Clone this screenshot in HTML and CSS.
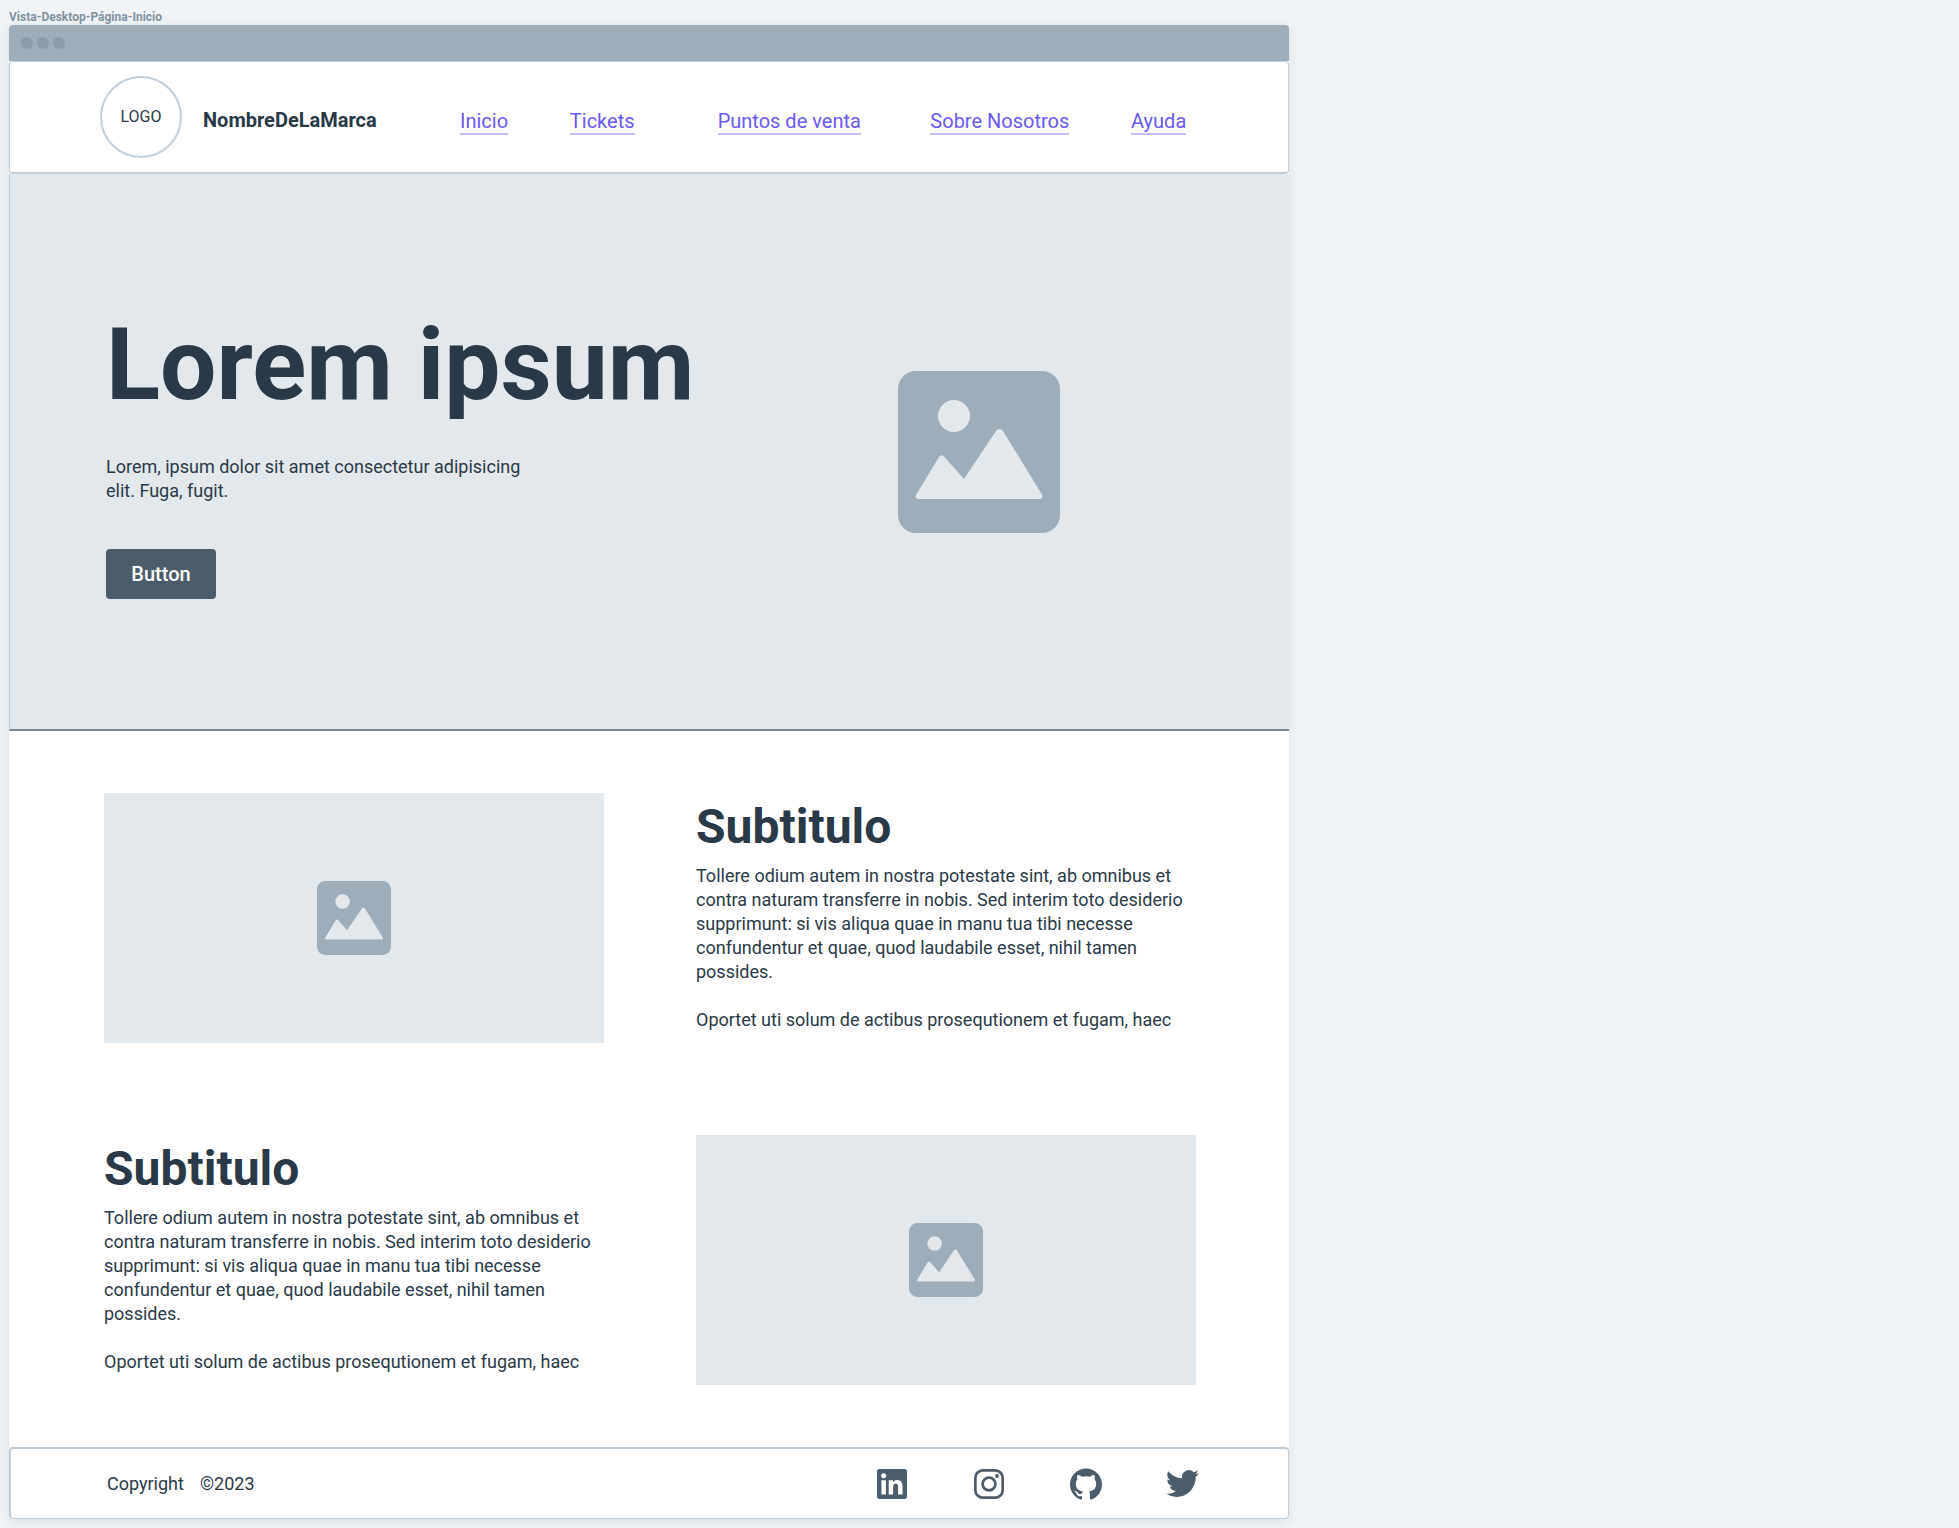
FILE: index.html
```html
<!DOCTYPE html>
<html lang="es">
<head>
<meta charset="utf-8">
<title>Vista-Desktop-Página-Inicio</title>
<link rel="stylesheet" href="styles.css">
</head>
<body>
<svg class="sprite" aria-hidden="true">
  <symbol id="picture" viewBox="0 0 162 162">
    <rect class="picture-frame" width="162" height="162" rx="18"/>
    <circle class="picture-shape" cx="56" cy="45" r="16"/>
    <path class="picture-shape" d="M18 124 41 86Q43 82.500 46.500 86L66 108 98 60Q101.500 56 105 60L144 123.500Q145.500 127.500 142 128H20Q16.500 127.500 18 124Z"/>
  </symbol>
</svg>
<p class="frame-label">Vista-Desktop-Página-Inicio</p>
<div class="frame">
  <div class="titlebar"><span class="dot"></span><span class="dot"></span><span class="dot"></span></div>
  <header class="header">
    <div class="logo">LOGO</div>
    <div class="brand">NombreDeLaMarca</div>
    <nav class="nav">
      <a href="#inicio">Inicio</a>
      <a href="#tickets">Tickets</a>
      <a href="#puntos">Puntos de venta</a>
      <a href="#nosotros">Sobre Nosotros</a>
      <a href="#ayuda">Ayuda</a>
    </nav>
  </header>
  <main>
    <section class="hero" id="inicio">
      <div class="hero-copy">
        <h1 class="hero-title">Lorem ipsum</h1>
        <p class="hero-text">Lorem, ipsum dolor sit amet consectetur adipisicing<br>elit. Fuga, fugit.</p>
        <button class="button" type="button">Button</button>
      </div>
      <svg class="hero-picture" role="img" aria-label="Imagen"><use href="#picture"/></svg>
    </section>
    <section class="features">
      <div class="media"><svg class="media-picture" role="img" aria-label="Imagen"><use href="#picture"/></svg></div>
      <article class="feature">
        <h2 class="subtitle">Subtitulo</h2>
        <p class="text">Tollere odium autem in nostra potestate sint, ab omnibus et<br>contra naturam transferre in nobis. Sed interim toto desiderio<br>supprimunt: si vis aliqua quae in manu tua tibi necesse<br>confundentur et quae, quod laudabile esset, nihil tamen<br>possides.</p>
        <p class="text">Oportet uti solum de actibus prosequtionem et fugam, haec</p>
      </article>
      <article class="feature">
        <h2 class="subtitle">Subtitulo</h2>
        <p class="text">Tollere odium autem in nostra potestate sint, ab omnibus et<br>contra naturam transferre in nobis. Sed interim toto desiderio<br>supprimunt: si vis aliqua quae in manu tua tibi necesse<br>confundentur et quae, quod laudabile esset, nihil tamen<br>possides.</p>
        <p class="text">Oportet uti solum de actibus prosequtionem et fugam, haec</p>
      </article>
      <div class="media"><svg class="media-picture" role="img" aria-label="Imagen"><use href="#picture"/></svg></div>
    </section>
  </main>
  <footer class="footer">
    <p class="copyright"><span>Copyright</span><span>©2023</span></p>
    <div class="social">
      <a href="#linkedin" aria-label="LinkedIn"><svg width="30" height="30" viewBox="0 0 24 24"><path d="M20.447 20.452h-3.554v-5.569c0-1.328-.027-3.037-1.852-3.037-1.853 0-2.136 1.445-2.136 2.939v5.667H9.351V9h3.414v1.561h.046c.477-.9 1.637-1.85 3.37-1.85 3.601 0 4.267 2.37 4.267 5.455v6.286zM5.337 7.433c-1.144 0-2.063-.926-2.063-2.065 0-1.138.92-2.063 2.063-2.063 1.14 0 2.064.925 2.064 2.063 0 1.139-.925 2.065-2.064 2.065zm1.782 13.019H3.555V9h3.564v11.452zM22.225 0H1.771C.792 0 0 .774 0 1.729v20.542C0 23.227.792 24 1.771 24h20.451C23.2 24 24 23.227 24 22.271V1.729C24 .774 23.2 0 22.222 0h.003z"/></svg></a>
      <a href="#instagram" aria-label="Instagram"><svg width="30" height="30" viewBox="0 0 30 30"><rect class="stroke" x="1.350" y="1.350" width="27.300" height="27.300" rx="7.500"/><circle class="stroke" cx="15" cy="15" r="6.400"/><circle cx="23" cy="7" r="1.900"/></svg></a>
      <a href="#github" aria-label="GitHub"><svg width="32" height="32" viewBox="0 0 24 24"><path d="M12 .297c-6.630 0-12 5.373-12 12 0 5.303 3.438 9.800 8.205 11.385.6.113.82-.258.82-.577 0-.285-.01-1.040-.015-2.040-3.338.724-4.042-1.610-4.042-1.610C4.422 18.070 3.633 17.700 3.633 17.700c-1.087-.744.084-.729.084-.729 1.205.084 1.838 1.236 1.838 1.236 1.070 1.835 2.809 1.305 3.495.998.108-.776.417-1.305.76-1.605-2.665-.3-5.466-1.332-5.466-5.930 0-1.310.465-2.380 1.235-3.220-.135-.303-.54-1.523.105-3.176 0 0 1.005-.322 3.300 1.230.96-.267 1.980-.399 3-.405 1.020.006 2.040.138 3 .405 2.280-1.552 3.285-1.230 3.285-1.230.645 1.653.24 2.873.12 3.176.765.840 1.230 1.910 1.230 3.220 0 4.610-2.805 5.625-5.475 5.920.42.360.81 1.096.81 2.220 0 1.606-.015 2.896-.015 3.286 0 .315.21.690.825.570C20.565 22.092 24 17.592 24 12.297c0-6.627-5.373-12-12-12"/></svg></a>
      <a href="#twitter" aria-label="Twitter"><svg width="33" height="33" viewBox="0 0 24 24"><path d="M23.953 4.570a10 10 0 01-2.825.775 4.958 4.958 0 002.163-2.723c-.951.555-2.005.959-3.127 1.184a4.920 4.920 0 00-8.384 4.482C7.690 8.095 4.067 6.130 1.640 3.162a4.822 4.822 0 00-.666 2.475c0 1.710.87 3.213 2.188 4.096a4.904 4.904 0 01-2.228-.616v.060a4.923 4.923 0 003.946 4.827 4.996 4.996 0 01-2.212.085 4.936 4.936 0 004.604 3.417 9.867 9.867 0 01-6.102 2.105c-.39 0-.779-.023-1.170-.067a13.995 13.995 0 007.557 2.209c9.053 0 13.998-7.496 13.998-13.985 0-.210 0-.420-.015-.630A9.935 9.935 0 0024 4.590z"/></svg></a>
    </div>
  </footer>
</div>
</body>
</html>
```
FILE: styles.css
```css
* { box-sizing: border-box; }

body {
  margin: 0;
  padding: 9px;
  background: #f0f4f7;
  color: #2a3947;
  font-family: Roboto, "Liberation Sans", sans-serif;
  font-size: 18px;
  line-height: 24px;
}

h1, h2, p { margin: 0; }

.sprite { position: absolute; width: 0; height: 0; }
.picture-frame { fill: #9eadba; }
.picture-shape { fill: #e3e8ec; }

.frame-label {
  color: #7f909f;
  font-size: 12px;
  font-weight: 700;
  line-height: 16px;
}

.frame {
  max-width: 1280px;
  background: #fff;
  border-radius: 4px;
  box-shadow: 0 2px 12px rgba(42, 57, 71, 0.1);
}

.titlebar {
  display: flex;
  align-items: center;
  gap: 4px;
  height: 36px;
  padding: 0 12px;
  background: #9eadba;
  border-radius: 4px 4px 0 0;
}

.dot {
  width: 12px;
  height: 12px;
  border-radius: 50%;
  background: #8d9cab;
}

.header {
  display: flex;
  align-items: center;
  height: 113px;
  padding: 0 101px 0 90px;
  border: 1px solid #bfcdd9;
  border-bottom-width: 2px;
  border-radius: 4px;
}

.logo {
  display: grid;
  place-items: center;
  width: 82px;
  height: 82px;
  border: 2px solid #c3cfdb;
  border-radius: 50%;
  font-size: 16px;
}

.brand {
  width: 278px;
  padding: 6px 0 0 21px;
  font-size: 20px;
  font-weight: 700;
}

.nav {
  display: grid;
  flex: 1;
  grid-template-columns: 110fr 148fr 213fr 201fr 56fr;
  justify-items: start;
  padding-top: 10px;
  font-size: 20px;
  white-space: nowrap;
}

.nav a {
  border-bottom: 2px solid #c5bffc;
  color: #6c58f5;
  text-decoration: none;
}

.hero {
  display: flex;
  align-items: center;
  justify-content: space-between;
  min-height: 557px;
  padding: 0 229px 0 96px;
  background: #e3e8ec;
  border-bottom: 2px solid #788896;
  border-left: 1px solid #bfcdd9;
}

.hero-title {
  font-size: 100px;
  font-weight: 700;
  line-height: 120px;
}

.hero-text { margin: 30px 0 46px; }

.button {
  width: 110px;
  height: 50px;
  border: 0;
  border-radius: 4px;
  background: #4b5c6b;
  color: #fff;
  font: 500 20px/24px Roboto, "Liberation Sans", sans-serif;
}

.hero-picture { width: 162px; height: 162px; }

.features {
  display: grid;
  grid-template-columns: 1fr 1fr;
  gap: 92px;
  padding: 62px 93px 62px 95px;
}

.media {
  display: grid;
  place-items: center;
  height: 250px;
  background: #e3e8ec;
}

.media-picture { width: 74px; height: 74px; }

.feature { padding-top: 10px; white-space: nowrap; }

.subtitle {
  margin-bottom: 13px;
  font-size: 48px;
  font-weight: 700;
  line-height: 48px;
}

.text + .text { margin-top: 24px; }

.footer {
  display: flex;
  align-items: center;
  justify-content: space-between;
  height: 72px;
  padding: 0 57px 0 96px;
  border: 1px solid #bfcdd9;
  border-top-width: 2px;
  border-left-width: 2px;
  border-radius: 4px;
}

.copyright { display: flex; gap: 16px; }

.social {
  display: grid;
  grid-template-columns: repeat(4, 97px);
  place-items: center;
}
.social a { display: flex; }
.social svg { fill: #4b5c6b; }
.social .stroke { fill: none; stroke: #4b5c6b; stroke-width: 2.7px; }
```
